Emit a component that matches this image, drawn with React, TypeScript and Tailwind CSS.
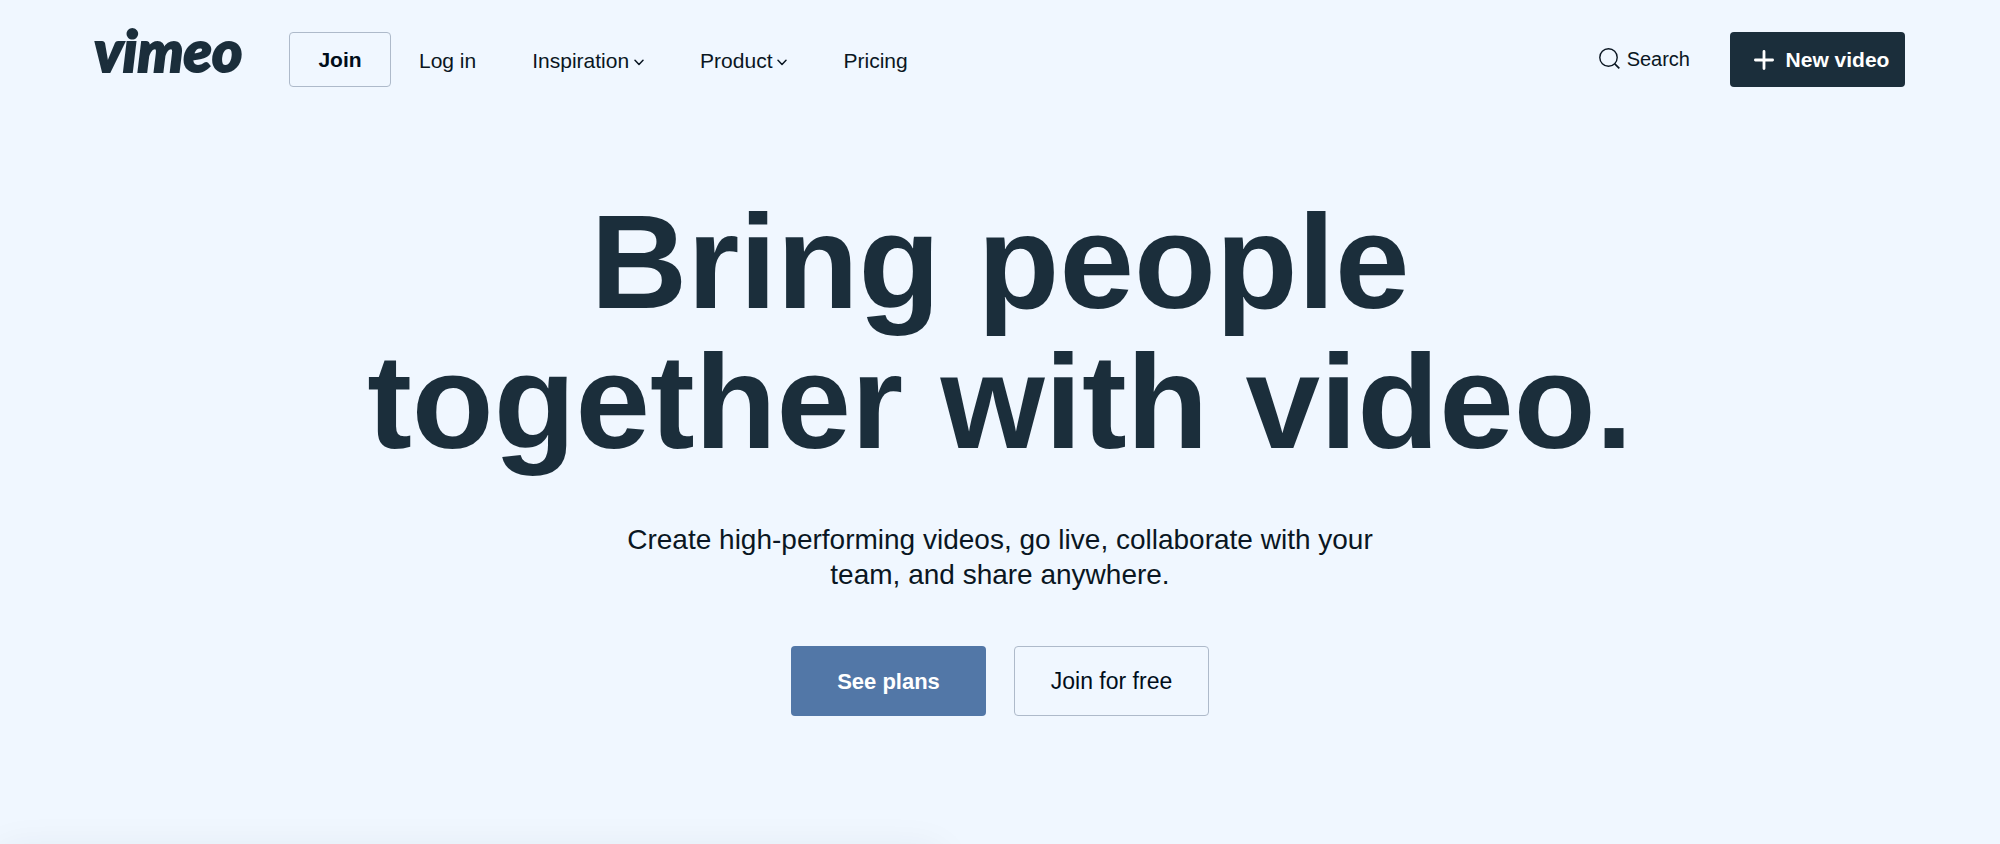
import { useState } from "react";

const Chevron = () => (
  <svg width="10" height="7" viewBox="0 0 10 7" fill="none" className="mt-1">
    <path d="M1 1.2 L5 5.4 L9 1.2" stroke="currentColor" strokeWidth="1.5" strokeLinecap="round" strokeLinejoin="round" />
  </svg>
);

const SearchIcon = () => (
  <svg width="21" height="21" viewBox="0 0 21 21" fill="none">
    <circle cx="9.5" cy="9.5" r="8.7" stroke="currentColor" strokeWidth="1.4" />
    <path d="M15.8 15.8 L20.3 20.3" stroke="currentColor" strokeWidth="1.7" />
  </svg>
);

const PlusIcon = () => (
  <svg width="20" height="20" viewBox="0 0 20 20" fill="none">
    <path d="M10 1.4 V18.6 M1.4 10 H18.6" stroke="currentColor" strokeWidth="2.8" strokeLinecap="round" />
  </svg>
);

type MenuProps = {
  label: string;
};

const NavMenu = ({ label }: MenuProps) => {
  const [isOpen, setIsOpen] = useState(false);

  return (
    <button
      type="button"
      aria-expanded={isOpen}
      onClick={() => setIsOpen(!isOpen)}
      className="flex items-center gap-[5px] cursor-pointer"
    >
      {label}
      <Chevron />
    </button>
  );
};

const Header = () => (
  <header className="flex items-center justify-between pl-[94px] pr-[95px] pt-8">
    <div className="flex items-center">
      <a
        href="#"
        className="w-[195px] pb-5 font-['Lato',sans-serif] text-[58px] leading-[35px] font-black italic text-[#1b2e3b] [-webkit-text-stroke:2px_#1b2e3b]"
      >
        vimeo
      </a>
      <button
        type="button"
        className="h-[55px] w-[102px] rounded border border-[#aebaca] text-[21px] font-bold text-[#000d1a] cursor-pointer"
      >
        Join
      </button>
      <nav className="ml-7 flex items-center gap-14 pt-[2px] text-[21px]">
        <a href="#">Log in</a>
        <NavMenu label="Inspiration" />
        <NavMenu label="Product" />
        <a href="#">Pricing</a>
      </nav>
    </div>

    <div className="flex items-center gap-10">
      <button type="button" className="flex items-center gap-[7px] pb-[2px] text-[20px] cursor-pointer">
        <SearchIcon />
        Search
      </button>
      <button
        type="button"
        className="flex h-[55px] w-[175px] items-center justify-center gap-3 rounded bg-[#1b2e3b] pl-2 text-[21px] font-bold text-white cursor-pointer"
      >
        <PlusIcon />
        New video
      </button>
    </div>
  </header>
);

const Hero = () => (
  <section className="flex flex-col items-center pt-[105px] pb-32 text-center">
    <h1 className="text-[134px] leading-[140px] font-bold text-[#1b2e3b]">
      Bring people
      <br />
      together with video.
    </h1>
    <p className="mt-[50px] max-w-[800px] text-[28px] leading-[35px]">
      Create high-performing videos, go live, collaborate with your team, and share anywhere.
    </p>
    <div className="mt-[54px] flex gap-7">
      <button
        type="button"
        className="h-[70px] w-[195px] rounded bg-[#5277a7] text-[22px] font-bold text-white cursor-pointer"
      >
        See plans
      </button>
      <button
        type="button"
        className="h-[70px] w-[195px] rounded border border-[#aebaca] text-[23px] text-[#000d1a] cursor-pointer"
      >
        Join for free
      </button>
    </div>
  </section>
);

const App = () => {
  return (
    <div className="flex h-screen flex-col overflow-hidden bg-[#f0f7ff] font-['Liberation_Sans',Arial,sans-serif] text-[#0a1622]">
      <Header />
      <main>
        <Hero />
        {/* preview card, only its shadow shows above the fold */}
        <div className="mt-2 h-96 w-[47%] rounded-lg bg-white shadow-[0_0_40px_#1b2e3b14]" />
      </main>
    </div>
  );
};

export default App;
